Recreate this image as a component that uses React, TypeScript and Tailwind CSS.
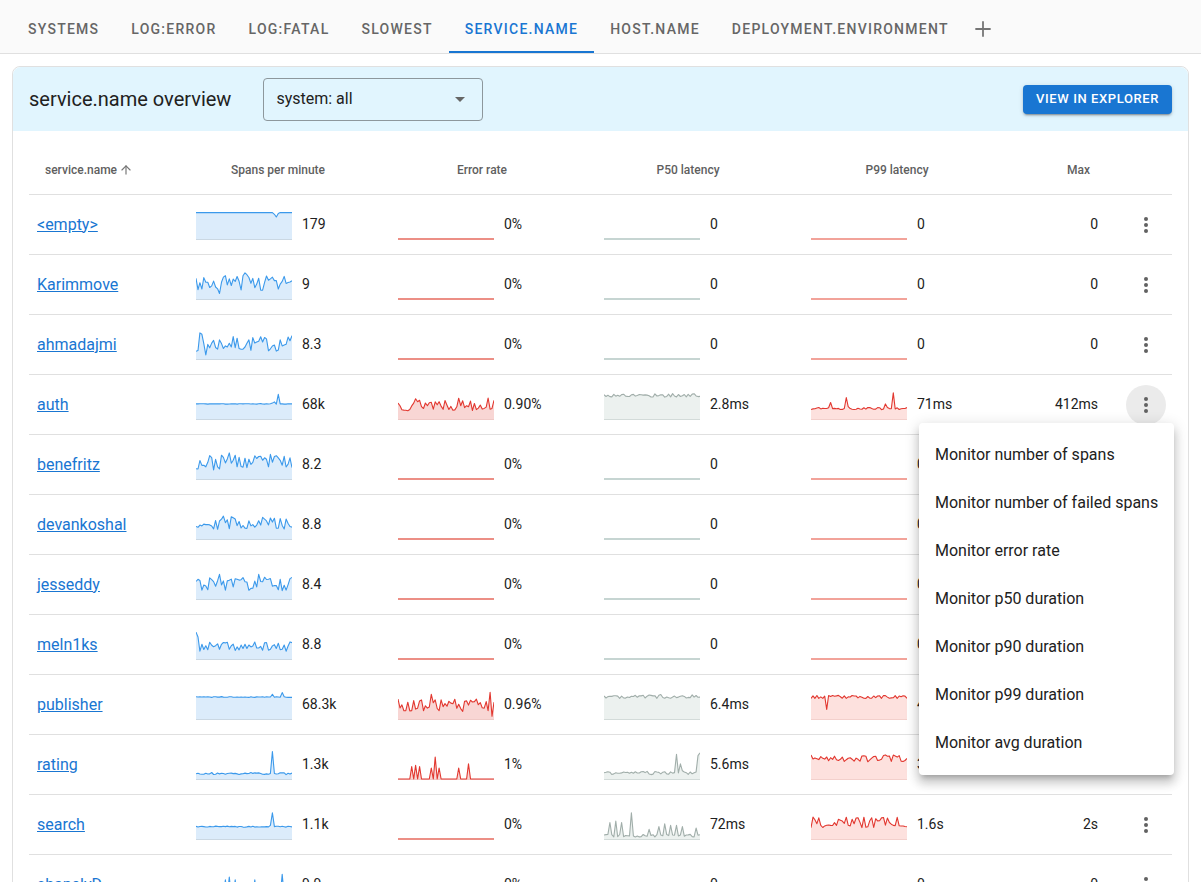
import { ArrowUp, Plus } from "lucide-react";

type Kind = "spans" | "error" | "p50" | "p99";

type Row = {
  name: string;
  spans: number[];
  spansV: string;
  err: number[] | null;
  errV: string;
  p50: number[] | null;
  p50V: string;
  p99: number[] | null;
  p99V: string;
  max: string;
  active?: boolean;
};

const N = 50;

// small seeded random so sparklines look the same every render
function rng(seed: number) {
  let a = seed;
  return () => {
    a |= 0;
    a = (a + 0x6d2b79f5) | 0;
    let t = Math.imul(a ^ (a >>> 15), 1 | a);
    t = (t + Math.imul(t ^ (t >>> 7), 61 | t)) ^ t;
    return ((t ^ (t >>> 14)) >>> 0) / 4294967296;
  };
}

function noisy(seed: number, base: number, amp: number, spikes: [number, number][] = []) {
  const r = rng(seed);
  const arr = Array.from({ length: N }, () => base + (r() - 0.5) * amp);
  spikes.forEach(([i, v]) => (arr[i] = v));
  return arr;
}

function sparse(spikes: [number, number][], base = 0) {
  const arr = Array.from({ length: N }, () => base);
  spikes.forEach(([i, v]) => (arr[i] = v));
  return arr;
}

const STYLES: Record<Kind, { line: string; fill: string; zero: string; base: string }> = {
  spans: { line: "#3b99eb", fill: "#dcecfb", zero: "#3b99eb", base: "#cbd8e3" },
  error: { line: "#e2372f", fill: "#f8d6d4", zero: "#ec8f86", base: "#efc9c6" },
  p50: { line: "#a1aeaa", fill: "#ecf1ef", zero: "#c6d5d2", base: "#d3dbd9" },
  p99: { line: "#e2372f", fill: "#fde1de", zero: "#f2a39a", base: "#f3d0cc" },
};

function Sparkline({ data, kind }: { data: number[] | null; kind: Kind }) {
  const s = STYLES[kind];
  const W = 96;
  const H = 30;
  if (!data) {
    return (
      <svg width={W} height={H} className="shrink-0">
        <line x1="0" y1="29" x2={W} y2="29" stroke={s.zero} strokeWidth="2" />
      </svg>
    );
  }
  const pts = data.map((v, i) => {
    const c = Math.max(0, Math.min(1, v));
    return [(i / (data.length - 1)) * W, 1.5 + (1 - c) * 27.5];
  });
  const line = pts.map((p, i) => `${i ? "L" : "M"}${p[0].toFixed(1)},${p[1].toFixed(1)}`).join("");
  const area = `${line}L${W},${H}L0,${H}Z`;
  return (
    <svg width={W} height={H} className="shrink-0">
      <path d={area} fill={s.fill} />
      <line x1="0" y1="29.5" x2={W} y2="29.5" stroke={s.base} strokeWidth="1" />
      <path d={line} fill="none" stroke={s.line} strokeWidth="1.1" strokeLinejoin="round" />
    </svg>
  );
}

const rows: Row[] = [
  { name: "<empty>", spans: sparse([[41, 0.8], [40, 0.9], [42, 0.93]], 0.96), spansV: "179", err: null, errV: "0%", p50: null, p50V: "0", p99: null, p99V: "0", max: "0" },
  { name: "Karimmove", spans: noisy(3, 0.62, 0.6, [[25, 0.95], [12, 0.2]]), spansV: "9", err: null, errV: "0%", p50: null, p50V: "0", p99: null, p99V: "0", max: "0" },
  { name: "ahmadajmi", spans: noisy(7, 0.55, 0.55, [[2, 0.95], [3, 0.9], [5, 0.15], [49, 0.85]]), spansV: "8.3", err: null, errV: "0%", p50: null, p50V: "0", p99: null, p99V: "0", max: "0" },
  {
    name: "auth",
    spans: noisy(11, 0.55, 0.02, [[39, 0.58], [40, 0.62], [42, 0.9], [43, 0.55]]),
    spansV: "68k",
    err: noisy(13, 0.55, 0.5),
    errV: "0.90%",
    p50: noisy(17, 0.86, 0.14),
    p50V: "2.8ms",
    p99: noisy(19, 0.38, 0.08, [[10, 0.6], [18, 0.78], [19, 0.45], [38, 0.55], [42, 0.95]]),
    p99V: "71ms",
    max: "412ms",
    active: true,
  },
  { name: "benefritz", spans: noisy(23, 0.6, 0.55, [[17, 0.95], [38, 0.9]]), spansV: "8.2", err: null, errV: "0%", p50: null, p50V: "0", p99: null, p99V: "0", max: "0" },
  { name: "devankoshal", spans: noisy(29, 0.6, 0.5), spansV: "8.8", err: null, errV: "0%", p50: null, p50V: "0", p99: null, p99V: "0", max: "0" },
  { name: "jesseddy", spans: noisy(31, 0.55, 0.5, [[12, 0.9], [32, 0.9]]), spansV: "8.4", err: null, errV: "0%", p50: null, p50V: "0", p99: null, p99V: "0", max: "0" },
  { name: "meln1ks", spans: noisy(37, 0.45, 0.35, [[0, 0.98], [1, 0.8]]), spansV: "8.8", err: null, errV: "0%", p50: null, p50V: "0", p99: null, p99V: "0", max: "0" },
  {
    name: "publisher",
    spans: noisy(41, 0.8, 0.03, [[39, 0.9], [44, 0.96]]),
    spansV: "68.3k",
    err: noisy(43, 0.5, 0.45, [[47, 0.97], [48, 0.1], [17, 0.9]]),
    errV: "0.96%",
    p50: noisy(47, 0.82, 0.14),
    p50V: "6.4ms",
    p99: noisy(53, 0.8, 0.12, [[8, 0.35]]),
    p99V: "45ms",
    max: "1s",
  },
  {
    name: "rating",
    spans: noisy(59, 0.2, 0.08, [[38, 0.2], [39, 1], [40, 0.2]]),
    spansV: "1.3k",
    err: sparse([[7, 0.45], [9, 0.5], [11, 0.45], [17, 0.4], [19, 0.8], [21, 0.4], [31, 0.4], [36, 0.55]]),
    errV: "1%",
    p50: noisy(61, 0.22, 0.12, [[37, 0.9], [39, 0.55], [40, 0.3], [48, 0.85], [49, 0.95]]),
    p50V: "5.6ms",
    p99: noisy(67, 0.75, 0.25),
    p99V: "38ms",
    max: "1s",
  },
  {
    name: "search",
    spans: noisy(71, 0.45, 0.04, [[38, 0.5], [39, 0.95], [40, 0.45]]),
    spansV: "1.1k",
    err: null,
    errV: "0%",
    p50: noisy(73, 0.12, 0.1, [[3, 0.6], [6, 0.65], [9, 0.6], [14, 0.95], [23, 0.35], [28, 0.45], [31, 0.55], [34, 0.5], [37, 0.5], [40, 0.45], [47, 0.4]]),
    p50V: "72ms",
    p99: noisy(79, 0.6, 0.4),
    p99V: "1.6s",
    max: "2s",
  },
  {
    name: "shanelyD",
    spans: sparse([[2, 0.6], [15, 0.7], [17, 0.8], [20, 0.7], [25, 0.6], [30, 0.7], [44, 0.9]], 0.1),
    spansV: "9.9",
    err: null,
    errV: "0%",
    p50: null,
    p50V: "0",
    p99: null,
    p99V: "0",
    max: "0",
  },
];

const tabs = ["Systems", "Log:error", "Log:fatal", "Slowest", "service.name", "host.name", "deployment.environment"];

const menuItems = [
  "Monitor number of spans",
  "Monitor number of failed spans",
  "Monitor error rate",
  "Monitor p50 duration",
  "Monitor p90 duration",
  "Monitor p99 duration",
  "Monitor avg duration",
];

const GRID = "grid grid-cols-[159px_202px_206px_207px_207px_100px_1fr]";

function MoreIcon() {
  return (
    <svg width="24" height="24" viewBox="0 0 24 24">
      <circle cx="12" cy="6" r="2" fill="#616161" />
      <circle cx="12" cy="12" r="2" fill="#616161" />
      <circle cx="12" cy="18" r="2" fill="#616161" />
    </svg>
  );
}

function MetricCell({ data, kind, value }: { data: number[] | null; kind: Kind; value: string }) {
  return (
    <div className="flex items-center gap-[10px] pl-2">
      <Sparkline data={data} kind={kind} />
      <span className="text-[14px] text-[#212121]">{value}</span>
    </div>
  );
}

export default function App() {
  return (
    <div className="relative h-[882px] overflow-hidden bg-white font-['Roboto',sans-serif]">
      <div className="flex h-[54px] border-b border-[#e0e0e0] bg-[#fafafa] pl-3 pt-[5px]">
        {tabs.map((t) => {
          const selected = t === "service.name";
          return (
            <div
              key={t}
              className={`relative flex min-w-[90px] items-center justify-center px-4 text-[14px] font-medium uppercase tracking-[1.25px] ${
                selected ? "text-[#1976d2]" : "text-[#666666]"
              }`}
            >
              {t}
              {selected ? <div className="absolute bottom-0 left-0 right-0 h-[2px] bg-[#1976d2]" /> : null}
            </div>
          );
        })}
        <div className="flex w-9 items-center justify-center text-[#757575]">
          <Plus size={24} strokeWidth={1.8} />
        </div>
      </div>

      <div className="mx-3 mt-3 rounded-lg border border-[#e0e0e0] bg-white">
        <div className="flex h-16 items-center rounded-t-lg bg-[#e1f5fe] px-4">
          <h2 className="text-[20px] text-[#212121]">service.name overview</h2>
          <div className="ml-8 flex h-[43px] w-[220px] items-center justify-between rounded border border-[#8d979c] pl-3 pr-[10px]">
            <span className="text-[16px] text-[#212121]">system: all</span>
            <svg width="24" height="24" viewBox="0 0 24 24">
              <path d="M7 10l5 5 5-5z" fill="#666666" />
            </svg>
          </div>
          <button
            type="button"
            className="ml-auto h-[29px] rounded bg-[#1976d2] px-[13px] text-[13px] font-medium uppercase tracking-[0.6px] text-white shadow-[0px_3px_1px_-2px_rgba(0,0,0,0.2),0px_2px_2px_0px_rgba(0,0,0,0.14),0px_1px_5px_0px_rgba(0,0,0,0.12)]"
          >
            View in explorer
          </button>
        </div>

        <div className="px-4 pt-4">
          <div className={`${GRID} h-[48px] items-center border-b border-[#e0e0e0] pb-[2px] text-[12px] font-medium text-[#5f5f5f]`}>
            <div className="flex items-center gap-[2px] pl-4">
              service.name
              <ArrowUp size={14} className="text-[#757575]" />
            </div>
            <div className="pl-2"><div className="w-[164px] text-center">Spans per minute</div></div>
            <div className="pl-2"><div className="w-[168px] text-center">Error rate</div></div>
            <div className="pl-2"><div className="w-[168px] text-center">P50 latency</div></div>
            <div className="pl-2"><div className="w-[172px] text-center">P99 latency</div></div>
            <div className="pr-5 text-right">Max</div>
            <div />
          </div>

          {rows.map((r) => (
            <div key={r.name} className={`${GRID} h-[60px] items-center border-b border-[#e0e0e0]`}>
              <div className="pl-2">
                <a href="#" className="text-[16px] text-[#1976d2] underline decoration-[#1976d2]">
                  {r.name}
                </a>
              </div>
              <MetricCell data={r.spans} kind="spans" value={r.spansV} />
              <MetricCell data={r.err} kind="error" value={r.errV} />
              <MetricCell data={r.p50} kind="p50" value={r.p50V} />
              <MetricCell data={r.p99} kind="p99" value={r.p99V} />
              <div className="pr-3 text-right text-[14px] text-[#212121]">{r.max}</div>
              <div className="flex justify-end pr-[6px]">
                <div className={`flex h-10 w-10 items-center justify-center rounded-full ${r.active ? "bg-[#ebebeb]" : ""}`}>
                  <MoreIcon />
                </div>
              </div>
            </div>
          ))}
        </div>
      </div>

      <div className="absolute left-[919px] top-[423px] w-[255px] rounded bg-white py-2 shadow-[0px_5px_5px_-3px_rgba(0,0,0,0.2),0px_8px_10px_1px_rgba(0,0,0,0.14),0px_3px_14px_2px_rgba(0,0,0,0.12)]">
        {menuItems.map((m) => (
          <div key={m} className="flex h-12 items-center whitespace-nowrap px-4 text-[16px] text-[#212121]">
            {m}
          </div>
        ))}
      </div>
    </div>
  );
}
